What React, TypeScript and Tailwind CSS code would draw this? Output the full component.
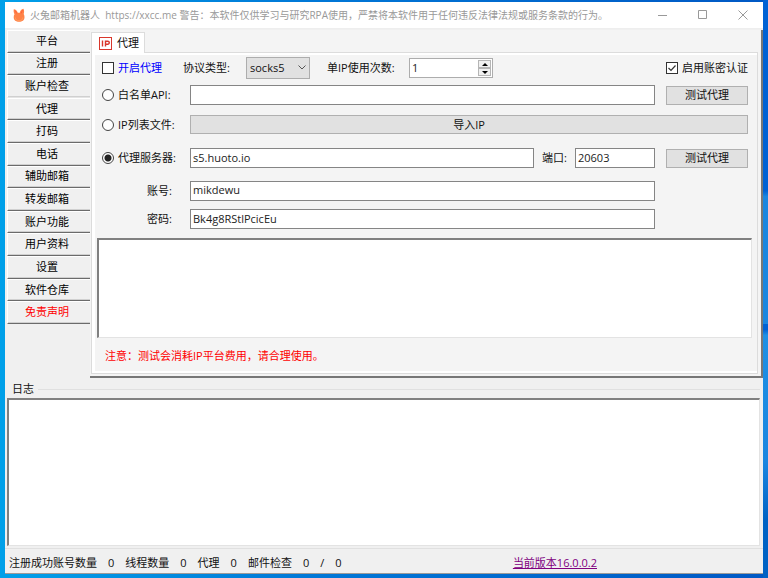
import React from 'react';

const sections = [
  '平台', '注册', '账户检查', '代理', '打码', '电话', '辅助邮箱',
  '转发邮箱', '账户功能', '用户资料', '设置', '软件仓库', '免责声明',
];

const stats = [
  ['注册成功账号数量', '0'],
  ['线程数量', '0'],
  ['代理', '0'],
];

const field = 'h-5 min-w-0 border border-[#858585] bg-white px-[2px] pb-[2px] text-[11px] leading-4 text-[#222] outline-none';
const button = 'h-[19px] border border-[#b0b0b0] bg-[#e1e1e1] text-center leading-4';

function RabbitIcon() {
  return (
    <svg viewBox="0 0 12 14" className="h-[14px] w-3 shrink-0" aria-hidden="true">
      <path d="M.8 1.200C2.600 1.400 4.200 2.800 4.800 4.800h2C7.200 2.600 8.600 1 10.400.7c.9 1.700.9 3.700.3 5.300.6 1 .8 2.100.8 3.200 0 3-2.200 4.500-5.400 4.500S.7 12.200.7 9.200C.7 8 1 7 1.500 6.200.7 4.700.4 2.900.8 1.200z" fill="#ff8348" />
      <path d="M1.600 2.500c1 .6 1.700 1.600 2 2.900M9.900 2.200c-.9.800-1.500 1.800-1.700 3.200" stroke="#ff5f3a" strokeWidth="1" fill="none" />
      <path d="M2.300 9.500c0 2 1.500 3.200 3.800 3.200s3.700-1.200 3.700-3.200" stroke="#ff9d60" strokeWidth="1" fill="none" />
    </svg>
  );
}

function TitleBar() {
  return (
    <header className="flex h-[27px] shrink-0 items-center border-b border-[#eeeeee] bg-white pl-2 text-[#999]">
      <RabbitIcon />
      <h1 className="ml-[5px] min-w-0 flex-1 overflow-hidden whitespace-pre text-[10px]">火兔邮箱机器人  https://xxcc.me 警告：本软件仅供学习与研究RPA使用，严禁将本软件用于任何违反法律法规或服务条款的行为。</h1>
      <div className="flex shrink-0">
        <button aria-label="最小化" className="flex h-6 w-10 items-center justify-center">
          <svg viewBox="0 0 10 10" className="size-[10px]"><path d="M0 5.500h9" stroke="#999" /></svg>
        </button>
        <button aria-label="最大化" className="flex h-6 w-10 items-center justify-center">
          <svg viewBox="0 0 10 10" className="size-[10px]"><path d="M.5.5h8v8h-8z" fill="none" stroke="#999" /></svg>
        </button>
        <button aria-label="关闭" className="flex h-6 w-10 items-center justify-center">
          <svg viewBox="0 0 10 10" className="size-[10px]"><path d="M.5.5l9 9M9.500.5l-9 9" stroke="#999" /></svg>
        </button>
      </div>
    </header>
  );
}

function Sidebar() {
  return (
    <nav className="flex h-[294px] w-[85px] shrink-0 flex-col pl-[2px]">
      {sections.map((name, i) => {
        const edge = i === 2 ? 'border-b-[#e4e4e4]' : 'border-b-[#6b6b6b]';
        const tone = i === 12 ? 'text-[#ff0000]' : 'text-black';
        return (
          <button key={name} className={`min-h-0 flex-1 border-b border-l border-t border-l-white border-t-white pb-px pr-1 leading-4 shadow-[inset_0_-1px_0_#d0d0d0] ${edge} ${tone}`}>
            {name}
          </button>
        );
      })}
    </nav>
  );
}

function Radio({ id, label, checked = false }: { id: string; label: string; checked?: boolean }) {
  return (
    <div className="flex w-[88px] shrink-0 items-center gap-1">
      <input
        id={id}
        type="radio"
        name="source"
        defaultChecked={checked}
        className="size-3 shrink-0 appearance-none rounded-full border border-[#444] bg-white checked:bg-[radial-gradient(circle,#222_3px,#fff_4px)]"
      />
      <label htmlFor={id} className="whitespace-nowrap">{label}</label>
    </div>
  );
}

function Spinner() {
  return (
    <div className="ml-[17px] flex h-5 w-[84px] border border-[#adadad] bg-white">
      <input id="uses" defaultValue="1" className="w-0 min-w-0 flex-1 px-[2px] pb-px text-[11px] leading-4 text-[#222] outline-none" />
      <div className="flex w-[14px] flex-col py-px pr-px">
        <button aria-label="增加" className="flex flex-1 items-center justify-center border border-[#b5b5b5] bg-[#f0f0f0]">
          <svg viewBox="0 0 6 3" className="h-[3px] w-[6px]"><path d="M0 3l3-3 3 3z" /></svg>
        </button>
        <button aria-label="减少" className="flex flex-1 items-center justify-center border border-[#b5b5b5] bg-[#f0f0f0]">
          <svg viewBox="0 0 6 3" className="h-[3px] w-[6px]"><path d="M0 0l3 3 3-3z" /></svg>
        </button>
      </div>
    </div>
  );
}

function ProxyForm() {
  return (
    <form className="flex flex-1 flex-col bg-[#f4f4f4]" onSubmit={(e) => e.preventDefault()}>
      <div className="flex h-[26px] items-center pl-[7px] pr-[9px]">
        <div className="flex w-[81px] items-center gap-1">
          <input id="enable" type="checkbox" className="size-3 shrink-0 appearance-none border border-[#333] bg-white" />
          <label htmlFor="enable" className="text-[#0000ff]">开启代理</label>
        </div>
        <label htmlFor="protocol" className="w-[63px]">协议类型:</label>
        <div className="relative">
          <select id="protocol" defaultValue="socks5" className="block h-[22px] w-16 appearance-none border border-[#adadad] bg-[#e1e1e1] pl-[3px] text-[11px] leading-4 outline-none">
            <option>socks5</option>
            <option>http</option>
          </select>
          <svg viewBox="0 0 8 5" className="pointer-events-none absolute right-1 top-2 h-[5px] w-2"><path d="M.5.5L4 4 7.500.5" fill="none" stroke="#555" /></svg>
        </div>
        <label htmlFor="uses" className="ml-[17px] w-[65px] whitespace-nowrap">单IP使用次数:</label>
        <Spinner />
        <div className="ml-auto flex w-[82px] items-center gap-1">
          <span className="relative flex size-3 shrink-0">
            <input id="auth" type="checkbox" defaultChecked className="size-3 appearance-none border border-[#333] bg-white" />
            <svg viewBox="0 0 12 12" className="pointer-events-none absolute inset-0"><path d="M2.500 6l2.500 2.500 4.500-5" fill="none" stroke="#333" strokeWidth="1.200" /></svg>
          </span>
          <label htmlFor="auth" className="whitespace-nowrap">启用账密认证</label>
        </div>
      </div>
      <div className="flex h-7 items-center pl-[7px] pr-[9px]">
        <Radio id="whitelist" label="白名单API:" />
        <input aria-label="白名单API" className={`${field} flex-1`} />
        <button className={`${button} ml-[11px] w-[82px]`}>测试代理</button>
      </div>
      <div className="flex h-[31px] items-center pl-[7px] pr-[9px]">
        <Radio id="iplist" label="IP列表文件:" />
        <button className={`${button} flex-1`}>导入IP</button>
      </div>
      <div className="flex h-9 items-center pl-[7px] pr-[9px]">
        <Radio id="server" label="代理服务器:" checked />
        <input aria-label="代理服务器" defaultValue="s5.huoto.io" className={`${field} flex-1`} />
        <label htmlFor="port" className="w-[41px] pl-2">端口:</label>
        <input id="port" defaultValue="20603" className={`${field} w-20`} />
        <button className={`${button} ml-[11px] w-[82px]`}>测试代理</button>
      </div>
      <div className="flex h-[29px] items-center pl-[7px] pr-[102px]">
        <label htmlFor="account" className="w-[88px] pl-[45px]">账号:</label>
        <input id="account" defaultValue="mikdewu" className={`${field} flex-1`} />
      </div>
      <div className="flex h-7 items-center pl-[7px] pr-[102px]">
        <label htmlFor="password" className="w-[88px] pl-[45px]">密码:</label>
        <input id="password" defaultValue="Bk4g8RStlPcicEu" className={`${field} flex-1`} />
      </div>
      <textarea aria-label="测试结果" className="mx-[2px] mr-[5px] mt-[5px] block h-[100px] resize-none border-b border-l-2 border-r border-t-2 border-b-[#e3e3e3] border-l-[#808080] border-r-[#e3e3e3] border-t-[#808080] bg-white outline-none" />
      <p className="px-[10px] pb-[7px] pt-[10px] leading-4 text-[#ff0000]">注意：测试会消耗IP平台费用，请合理使用。</p>
    </form>
  );
}

export default function App() {
  return (
    <div className="flex h-screen flex-col bg-[linear-gradient(180deg,#0062d4_0,#0062d4_33%,#1a86e0_34%,#1a86e0_56%,#0062d4_56%,#0062d4_57%,#1e90e4_58%,#1a86e0_80%,#0062c4_90%),linear-gradient(90deg,#00a0e9,#0078d7_40%,#0058c4)] bg-[length:5px_100%,100%_100%] bg-[position:right_top,left_top] bg-no-repeat pb-1 pl-[5px] pr-[5px] pt-[2px] font-['Open_Sans','Noto_Sans_CJK_SC',sans-serif] text-[11px] leading-4 text-[#111]">
      <div className="flex min-h-0 flex-1 flex-col border-b border-[#9a9a9a] bg-[#f0f0f0]">
        <TitleBar />
        <div className="flex shrink-0 pt-px">
          <Sidebar />
          <main className="flex min-w-0 flex-1 flex-col border-b-2 border-r-2 border-b-[#777] border-r-[#777] bg-[#f4f4f4] pb-[2px] pl-px pr-[3px]">
            <div className="flex h-[23px] items-end">
              <button className="flex h-[21px] w-[54px] items-center gap-[5px] border-l border-r border-t border-[#dcdcdc] bg-white pl-[7px]">
                <svg viewBox="0 0 13 13" className="size-[13px] shrink-0" aria-hidden="true">
                  <rect x=".5" y=".5" width="12" height="12" fill="#fff" stroke="#d9372c" />
                  <path d="M3.500 3.500v6M6.500 9.500V4.200h2.300a1.500 1.500 0 010 3H6.500" fill="none" stroke="#d9372c" strokeWidth="1.400" />
                </svg>
                <span className="-mr-2 whitespace-nowrap">代理</span>
              </button>
              <div className="h-full flex-1 border-b border-[#dcdcdc]" />
            </div>
            <div className="flex flex-1 flex-col border-b border-l border-r border-[#dcdcdc] bg-white pb-[2px] pl-[3px] pt-[2px]">
              <ProxyForm />
            </div>
          </main>
        </div>
        <section className="flex min-h-0 flex-1 flex-col pl-[2px] pr-[3px] pt-[3px]">
          <div className="flex items-center gap-1">
            <label htmlFor="log" className="pl-[5px]">日志</label>
            <div className="h-px flex-1 bg-[#e0e0e0]" />
          </div>
          <textarea id="log" className="mt-px block min-h-0 flex-1 resize-none border-b border-l-2 border-r border-t-2 border-b-[#e3e3e3] border-l-[#808080] border-r-[#e3e3e3] border-t-[#808080] bg-white outline-none" />
        </section>
        <footer className="mt-[2px] flex h-[25px] shrink-0 items-center border-t border-[#e0e0e0] pl-1 pt-[3px]">
          {stats.map(([name, value]) => (
            <span key={name} className="flex whitespace-nowrap pr-[11px]">
              {name}<span className="pl-[11px]">{value}</span>
            </span>
          ))}
          <span className="flex gap-[11px] whitespace-nowrap"><span>邮件检查</span><span>0</span><span>/</span><span>0</span></span>
          <a href="#version" className="ml-auto mr-[166px] text-[#800080] underline">当前版本16.0.0.2</a>
        </footer>
      </div>
    </div>
  );
}
